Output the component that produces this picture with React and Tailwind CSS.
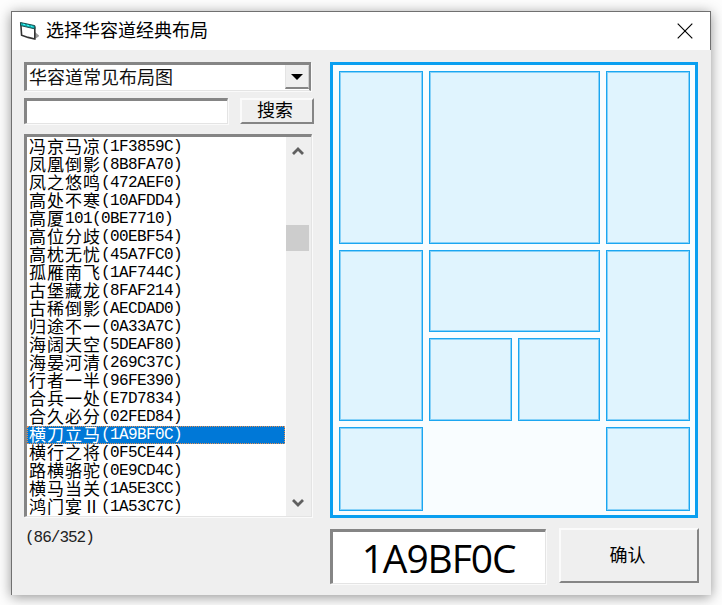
import React from "react";

const layouts = [
  ["冯京马凉", "(1F3859C)"],
  ["凤凰倒影", "(8B8FA70)"],
  ["凤之悠鸣", "(472AEF0)"],
  ["高处不寒", "(10AFDD4)"],
  ["高厦", "101(0BE7710)"],
  ["高位分歧", "(00EBF54)"],
  ["高枕无忧", "(45A7FC0)"],
  ["孤雁南飞", "(1AF744C)"],
  ["古堡藏龙", "(8FAF214)"],
  ["古稀倒影", "(AECDAD0)"],
  ["归途不一", "(0A33A7C)"],
  ["海阔天空", "(5DEAF80)"],
  ["海晏河清", "(269C37C)"],
  ["行者一半", "(96FE390)"],
  ["合兵一处", "(E7D7834)"],
  ["合久必分", "(02FED84)"],
  ["横刀立马", "(1A9BF0C)"],
  ["横行之将", "(0F5CE44)"],
  ["路横骆驼", "(0E9CD4C)"],
  ["横马当关", "(1A5E3CC)"],
  ["鸿门宴Ⅱ", "(1A53C7C)"],
];

const blocks = [
  "col-start-1 row-start-1 row-span-2",
  "col-start-2 row-start-1 col-span-2 row-span-2",
  "col-start-4 row-start-1 row-span-2",
  "col-start-1 row-start-3 row-span-2",
  "col-start-2 row-start-3 col-span-2",
  "col-start-4 row-start-3 row-span-2",
  "col-start-2 row-start-4",
  "col-start-3 row-start-4",
  "col-start-1 row-start-5",
  "col-start-4 row-start-5",
];

const cjk = "font-['Noto_Sans_CJK_SC',sans-serif]";
const mono = "font-['Liberation_Mono','Noto_Sans_CJK_SC',monospace] text-[16px] whitespace-pre";
const sunken =
  "bg-white border-t-[3px] border-l-[3px] border-r border-b border-t-[#858585] border-l-[#858585] border-r-[#e4e4e4] border-b-[#e4e4e4] shadow-[1px_1px_0_#fafafa]";
const raised =
  "bg-[#efefef] border-2 border-t-[#fbfbfb] border-l-[#fbfbfb] border-r-[#858585] border-b-[#858585]";

function FormIcon() {
  return (
    <svg className="ml-[7px] h-5 w-5 shrink-0" viewBox="0 0 20 20" fill="none">
      <path d="M12 13l4-2 4.5 3.8L16 18z" fill="#9a9a9a" />
      <path d="M1.8 2.5l14 3.5v12L9 16.4l-6.4-2.2z" fill="#fff" stroke="#333" strokeWidth="1.6" />
      <path d="M1.5 1.5L15.8 4.6v3.3L1.5 4.6z" fill="#12b4b4" stroke="#164545" strokeWidth="0.9" />
      <path d="M4 3.2l2 .5M8 4.2l2 .5M12 5.2l1.5.4" stroke="#4ff" strokeWidth="1" />
    </svg>
  );
}

function Row({ name, code, selected }) {
  return (
    <li
      className={
        "flex h-[18px] w-full shrink-0 items-center pl-[2px] leading-[18px] " +
        (selected
          ? "bg-[#0078d7] text-white outline-1 -outline-offset-1 outline-dotted outline-[#e69050]"
          : "text-black")
      }
    >
      <span className={cjk + " -mt-[2px] text-[17px] leading-[18px] tracking-[1px]"}>{name}</span>
      <span className={mono + " leading-[18px] tracking-[-0.6px]"}>{code}</span>
    </li>
  );
}

export default function App() {
  return (
    <div className="h-[605px] w-[722px] overflow-hidden bg-[#fdfdfd] pt-[11px] pl-[11px]">
      <div className="flex h-[584px] w-[700px] flex-col border-l border-[#707070] bg-[#efefef] shadow-[0_2px_12px_rgba(0,0,0,0.42)]">
        <header className="flex h-[39px] shrink-0 items-center border-t border-r border-[#707070] bg-white">
          <FormIcon />
          <h1 className={cjk + " ml-[7px] flex-1 pb-[4px] text-[18px] leading-none text-black"}>
            选择华容道经典布局
          </h1>
          <svg className="mr-[17px] h-4 w-4" viewBox="0 0 16 16">
            <path d="M.7.7l14.6 14.6M15.3.7L.7 15.3" stroke="#000" strokeWidth="1.15" />
          </svg>
        </header>

        <main className="flex flex-1 pt-[12px] pl-[12px]">
          <section className="flex w-[290px] flex-col">
            <div className="flex h-[29px] w-[287px] items-stretch border-t-[3px] border-r-2 border-b border-l-[3px] border-t-[#858585] border-r-[#858585] border-b-[#e4e4e4] border-l-[#858585] bg-white shadow-[1px_1px_0_#fafafa]">
              <span className={cjk + " flex-1 pl-[2px] text-[18px] leading-[23px] text-[#111]"}>
                华容道常见布局图
              </span>
              <button className="flex h-[24px] w-[24px] items-center justify-center border-t border-r border-b-2 border-l border-t-[#efefef] border-r-[#cfcfcf] border-b-[#858585] border-l-[#e4e4e4] bg-[#efefef]">
                <svg className="h-[6px] w-[12px]" viewBox="0 0 12 6">
                  <path d="M0 0h12L6 6z" fill="#000" />
                </svg>
              </button>
            </div>

            <div className="mt-[7px] flex justify-between">
              <div className={sunken + " h-[26px] w-[204px]"} />
              <button
                className={
                  raised + " " + cjk + " h-[26px] w-[74px] pr-[4px] pb-[3px] text-[18px] leading-[19px] text-black"
                }
              >
                搜索
              </button>
            </div>

            <div className={sunken + " mt-[10px] flex h-[383px] w-[288px]"}>
              <ul className="flex w-[259px] flex-col pt-px pr-px">
                {layouts.map(([name, code]) => (
                  <Row key={code} name={name} code={code} selected={code === "(1A9BF0C)"} />
                ))}
              </ul>
              <div className="flex flex-1 flex-col items-center bg-[#efefef] pt-[9px] pr-[2px] pb-[8px]">
                <svg className="h-[10px] w-[12px]" viewBox="0 0 12 10">
                  <path d="M1 8l5-5 5 5" fill="none" stroke="#606060" strokeWidth="2.8" />
                </svg>
                <div className="mt-[69px] h-[26px] w-[23px] bg-[#cdcdcd]" />
                <div className="flex-1" />
                <svg className="h-[10px] w-[12px]" viewBox="0 0 12 10">
                  <path d="M1 2l5 5 5-5" fill="none" stroke="#606060" strokeWidth="2.8" />
                </svg>
              </div>
            </div>

            <p className={mono + " mt-[10px] pl-px leading-[22px] tracking-[-1px] text-[#222]"}>
              (86/352)
            </p>
          </section>

          <section className="ml-[16px] flex w-[369px] flex-col">
            <div className="grid h-[456px] w-[368px] grid-cols-[84px_83px_82px_84px] grid-rows-[84px_83px_82px_83px_84px] gap-[6px] border-[3px] border-[#0a9ff0] bg-[#f9fdff] pt-[6px] pl-[6px]">
              {blocks.map((place) => (
                <div
                  key={place}
                  className={
                    place +
                    " border border-[#1ba6f1] bg-[#e0f4fe] shadow-[inset_0_0_0_1px_rgba(27,166,241,0.45)]"
                  }
                />
              ))}
            </div>
            <div className="mt-[10px] flex justify-between">
              <div
                className={
                  sunken +
                  " mt-px flex h-[55px] w-[216px] items-center justify-center pr-px font-['Open_Sans',sans-serif] text-[39px] leading-none tracking-[-1.1px] text-black"
                }
              >
                1A9BF0C
              </div>
              <button
                className={
                  raised + " " + cjk + " h-[55px] w-[140px] pr-[3px] pb-[4px] text-[18px] leading-none text-black"
                }
              >
                确认
              </button>
            </div>
          </section>
        </main>
      </div>
    </div>
  );
}
